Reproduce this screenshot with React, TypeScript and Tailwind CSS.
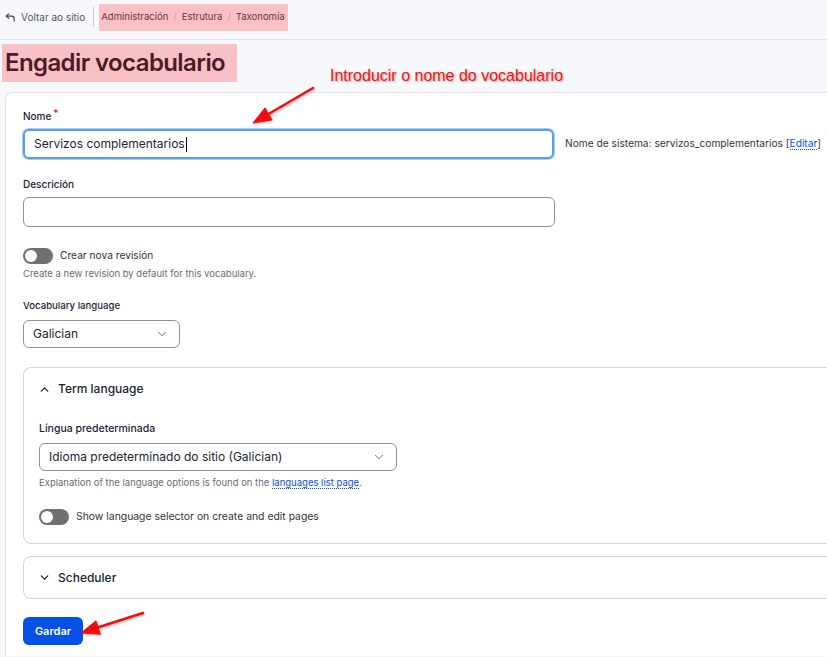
import { ChevronDown, ChevronUp } from 'lucide-react';

const Toggle = () => (
  <div className="w-[30px] h-[16px] rounded-full bg-[#707070] flex items-center pl-[2px] shrink-0">
    <div className="w-[12px] h-[12px] rounded-full bg-white" />
  </div>
);

const SelectBox = ({ value, width }: { value: string; width: string }) => (
  <div
    className={`${width} h-[28px] border border-[#8e929c] rounded-[6px] bg-white flex items-center justify-between pl-[9px] pr-[10px] text-[12px] text-[#222330]`}
  >
    <span>{value}</span>
    <ChevronDown size={14} strokeWidth={1.5} className="text-[#55565b]" />
  </div>
);

const Annotations = () => (
  <>
    <div
      className="absolute left-[330px] top-[66px] text-[16px] leading-[20px] text-[#ff1010] [font-family:'Liberation_Sans',Arial,sans-serif] [text-shadow:1px_1px_2px_rgba(0,0,0,0.35)]"
    >
      Introducir o nome do vocabulario
    </div>
    <svg className="absolute left-0 top-0 pointer-events-none" width="827" height="657">
      <defs>
        <filter id="sh" x="-20%" y="-20%" width="140%" height="140%">
          <feDropShadow dx="1" dy="1" stdDeviation="1" floodColor="#000" floodOpacity="0.3" />
        </filter>
      </defs>
      <g fill="#f00f0f" stroke="#f00f0f" filter="url(#sh)">
        <line x1="313" y1="88" x2="266" y2="115.5" strokeWidth="2.5" strokeLinecap="round" />
        <polygon points="253,123 272,119.9 265,107.9" strokeWidth="1" />
        <line x1="143" y1="613" x2="96" y2="628" strokeWidth="2.5" strokeLinecap="round" />
        <polygon points="81,633 100.3,634.2 96,620.8" strokeWidth="1" />
      </g>
    </svg>
  </>
);

export default function App() {
  return (
    <div className="relative w-full min-h-[657px] overflow-hidden bg-[#f7f8fb] text-[#222330] [font-family:Inter,'Noto_Sans',sans-serif]">
      {/* top bar */}
      <div className="h-[40px] border-b border-[#e3e4e9] flex items-center">
        <div className="flex items-center pl-[5px] text-[10px] text-[#545560] h-[28px] -mt-[5px]">
          <svg width="11" height="11" viewBox="0 0 12 12" fill="none" stroke="#45464c" strokeWidth="1.3" strokeLinecap="round" strokeLinejoin="round">
            <path d="M4 2 L1.5 4.5 L4 7" />
            <path d="M1.5 4.5 H7.5 A2.5 2.5 0 0 1 10 7 V10" />
          </svg>
          <span className="ml-[5px]">Voltar ao sitio</span>
          <div className="w-px h-[20px] bg-[#c9cad0] ml-[8px]" />
          <div className="ml-[5px] h-[27px] bg-[#f9c0c6] flex items-center gap-[5px] pl-[2px] pr-[3px] text-[9.5px] text-[#6c3540]">
            <span>Administración</span>
            <span className="text-[#c79aa2]">/</span>
            <span>Estrutura</span>
            <span className="text-[#c79aa2]">/</span>
            <span>Taxonomía</span>
          </div>
        </div>
      </div>

      {/* title */}
      <div className="mt-[4px] ml-[2px] w-[235px] h-[38px] bg-[#f9c0c6] flex items-center pl-[3px]">
        <h1 className="text-[24px] font-semibold tracking-[-0.025em] text-[#4d1a26] leading-none">
          Engadir vocabulario
        </h1>
      </div>

      {/* card */}
      <div className="mt-[10px] ml-[5px] w-[880px] bg-white border-l border-t border-[#e3e4e9] rounded-tl-[8px] pl-[17px] pt-[15px] pb-[11px]">
        <label className="block text-[10px] leading-[16px] font-medium text-[#222330]">
          Nome<span className="text-[#d72222] ml-[2px] relative -top-[3px] text-[10px]">*</span>
        </label>
        <div className="mt-[5px] flex items-center">
          <div className="w-[531px] h-[30px] rounded-[6px] border-[2px] border-[#5a9ce6] shadow-[0_0_0_1px_#a9cdf5] bg-white flex items-center pl-[9px] text-[12px] text-[#222330]">
            Servizos complementarios
            <span className="inline-block w-px h-[15px] bg-black ml-px" />
          </div>
          <div className="ml-[11px] text-[10.2px] text-[#333]">
            Nome de sistema: servizos_complementarios [
            <span className="text-[#0550e6] border-b border-dotted border-[#0550e6]">Editar</span>]
          </div>
        </div>

        <label className="block mt-[16px] text-[10px] leading-[18px] font-medium">Descrición</label>
        <div className="mt-[4px] w-[532px] h-[30px] rounded-[6px] border border-[#8e929c] bg-white" />

        <div className="mt-[21px] flex items-center gap-[7px]">
          <Toggle />
          <span className="text-[10.2px] text-[#333]">Crear nova revisión</span>
        </div>
        <div className="mt-[3px] text-[9.5px] leading-[14px] text-[#6a6b72]">
          Create a new revision by default for this vocabulary.
        </div>

        <label className="block mt-[16px] text-[9.6px] leading-[18px] font-medium">Vocabulary language</label>
        <div className="mt-[5px]">
          <SelectBox value="Galician" width="w-[157px]" />
        </div>

        {/* Term language */}
        <div className="mt-[19px] w-[830px] h-[177px] border border-[#d3d4d9] rounded-[8px] bg-white">
          <div className="h-[42px] flex items-center pl-[14px] gap-[7px] text-[12px] font-medium text-[#222330]">
            <ChevronUp size={13} strokeWidth={2.5} />
            <span>Term language</span>
          </div>
          <div className="pl-[15px]">
            <label className="block mt-[10px] text-[10.5px] leading-[18px] font-medium">Língua predeterminada</label>
            <div className="mt-[5px]">
              <SelectBox value="Idioma predeterminado do sitio (Galician)" width="w-[358px]" />
            </div>
            <div className="mt-[5px] text-[9.5px] leading-[14px] text-[#6a6b72]">
              Explanation of the language options is found on the{' '}
              <span className="text-[#0550e6] border-b border-dotted border-[#0550e6]">languages list page</span>.
            </div>
            <div className="mt-[19px] flex items-center gap-[7px]">
              <Toggle />
              <span className="text-[10.4px] text-[#333]">Show language selector on create and edit pages</span>
            </div>
          </div>
        </div>

        {/* Scheduler */}
        <div className="mt-[12px] w-[830px] h-[43px] border border-[#d3d4d9] rounded-[8px] bg-white flex items-center pl-[14px] gap-[7px] text-[12px] font-medium">
          <ChevronDown size={13} strokeWidth={2.5} />
          <span>Scheduler</span>
        </div>

        <button className="mt-[18px] w-[60px] h-[28px] rounded-[6px] bg-[#0550e6] text-white text-[11px] font-semibold flex items-center justify-center">
          Gardar
        </button>
      </div>

      <Annotations />
    </div>
  );
}
